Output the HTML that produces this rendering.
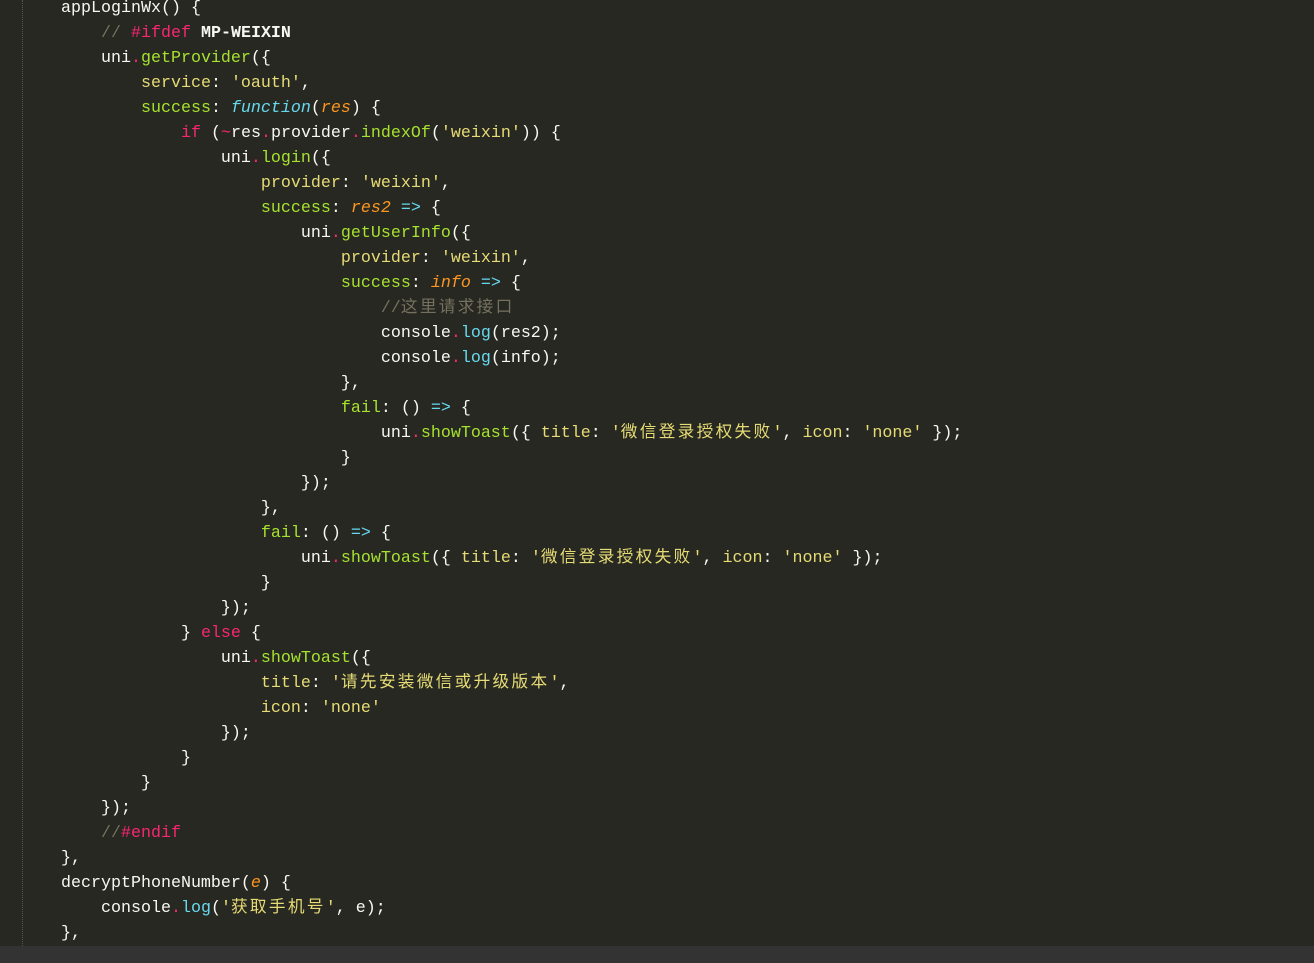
<!DOCTYPE html>
<html><head><meta charset="utf-8"><style>
body{margin:0;width:1314px;height:963px;background:#272822;overflow:hidden;position:relative}
pre{margin:0;position:absolute;left:61px;top:-4px;font-family:"Liberation Mono","Noto Sans CJK SC",monospace;font-size:16.67px;line-height:25px;color:#f8f8f2}
.g{color:#a6e22e}.p{color:#f92672}.s{color:#e6db74}.o{color:#fd971f;font-style:italic}.b{color:#66d9ef;font-style:italic}.a{color:#66d9ef}.c{color:#75715e}.k{color:#e6db74}.w{font-weight:bold}
.cj{letter-spacing:2.3px}
.bar{position:absolute;left:0;top:946px;width:1314px;height:17px;background:#333}
.gl{position:absolute;left:22px;top:0;height:946px;border-left:1px dotted #555}
</style></head><body>
<div class="gl"></div>
<pre>appLoginWx() {
    <span class="c">//</span> <span class="p">#ifdef</span> <span class="w">MP-WEIXIN</span>
    uni<span class="p">.</span><span class="g">getProvider</span>({
        <span class="k">service</span>: <span class="s">'oauth'</span>,
        <span class="g">success</span>: <span class="b">function</span>(<span class="o">res</span>) {
            <span class="p">if</span> (<span class="p">~</span>res<span class="p">.</span>provider<span class="p">.</span><span class="g">indexOf</span>(<span class="s">'weixin'</span>)) {
                uni<span class="p">.</span><span class="g">login</span>({
                    <span class="k">provider</span>: <span class="s">'weixin'</span>,
                    <span class="g">success</span>: <span class="o">res2</span> <span class="a">=&gt;</span> {
                        uni<span class="p">.</span><span class="g">getUserInfo</span>({
                            <span class="k">provider</span>: <span class="s">'weixin'</span>,
                            <span class="g">success</span>: <span class="o">info</span> <span class="a">=&gt;</span> {
                                <span class="c">//<span class="cj">这里请求接口</span></span>
                                console<span class="p">.</span><span class="a">log</span>(res2);
                                console<span class="p">.</span><span class="a">log</span>(info);
                            },
                            <span class="g">fail</span>: () <span class="a">=&gt;</span> {
                                uni<span class="p">.</span><span class="g">showToast</span>({ <span class="k">title</span>: <span class="s">'<span class="cj">微信登录授权失败</span>'</span>, <span class="k">icon</span>: <span class="s">'none'</span> });
                            }
                        });
                    },
                    <span class="g">fail</span>: () <span class="a">=&gt;</span> {
                        uni<span class="p">.</span><span class="g">showToast</span>({ <span class="k">title</span>: <span class="s">'<span class="cj">微信登录授权失败</span>'</span>, <span class="k">icon</span>: <span class="s">'none'</span> });
                    }
                });
            } <span class="p">else</span> {
                uni<span class="p">.</span><span class="g">showToast</span>({
                    <span class="k">title</span>: <span class="s">'<span class="cj">请先安装微信或升级版本</span>'</span>,
                    <span class="k">icon</span>: <span class="s">'none'</span>
                });
            }
        }
    });
    <span class="c">//</span><span class="p">#endif</span>
},
decryptPhoneNumber(<span class="o">e</span>) {
    console<span class="p">.</span><span class="a">log</span>(<span class="s">'<span class="cj">获取手机号</span>'</span>, e);
},</pre>
<div class="bar"></div>
</body></html>
